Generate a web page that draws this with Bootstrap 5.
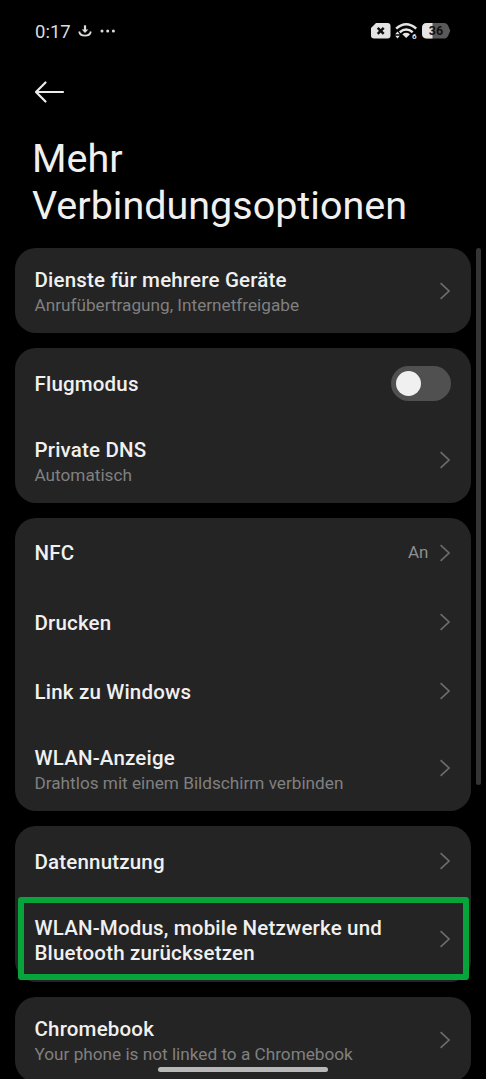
<!DOCTYPE html>
<html lang="de" data-bs-theme="dark">
<head>
<meta charset="utf-8">
<meta name="viewport" content="width=device-width, initial-scale=1">
<title>Mehr Verbindungsoptionen</title>
<link href="https://cdn.jsdelivr.net/npm/bootstrap@5.3.0/dist/css/bootstrap.min.css" rel="stylesheet">
<style>
  body { background: #fff; font-family: Roboto, "Liberation Sans", sans-serif; color: #f0f0f0; }
  .phone { width: 486px; height: 1079px; background: #000; }
  .statusbar { height: 62px; padding: 0 35px 0 35px; color: #dcdcdc; }
  .clock { font-size: 18.5px; line-height: 22px; padding-top: 1px; }
  .tray { margin-left: 7px; gap: 8px; }
  .backbar { height: 60px; padding: 0 0 1px 34px; }
  .page-title { font-size: 39.5px; line-height: 47px; font-weight: 400; padding: 13px 0 0 32px; height: 126px; color: #f0f0f0; }
  .groups { padding: 0 15px; gap: 15.4px; }
  .group-card { background: #242424; border: 0; border-radius: 21px; }
  .entry { height: 69.3px; padding: 0 20px 0 19.5px; background: transparent; border: 0; color: inherit; text-align: left; }
  .entry > .entry-name { padding-top: 2px; }
  .entry-tall { height: 85px; }
  .entry-tall > span:first-child { padding-top: 5px; }
  .entry-reset { height: 86px; }
  .entry-name { font-size: 20.5px; line-height: 25px; font-weight: 500; letter-spacing: .18px; }
  .entry-reset > .entry-name:first-child { padding-top: 4px; }
  .entry-note { font-size: 17.2px; line-height: 25px; color: #808080; }
  .entry-value { font-size: 17px; color: #8e8e8e; padding: 1px 10.500px 0 0; }
  .chev { stroke: #6c6c6c; }
  .toggle { width: 60px; height: 35px; background: #505050; padding-left: 5px; }
  .knob { width: 25px; height: 25px; background: #f0f0f0; }
  .highlight { inset: 1px 2.5px 1.5px 2.5px; border: 6px solid #07a33b; border-radius: 3px; }
  .scrollthumb { left: 476px; top: 248px; width: 5px; height: 537px; background: #343434; }
  .homebar { left: 158px; top: 1067px; width: 170px; height: 5px; background: #b8b8b8; }
</style>
</head>
<body class="overflow-hidden">
<svg class="d-none">
  <symbol id="chevron" viewBox="0 0 12 20"><path d="M1.6 2.2 L10 10 L1.6 17.8" fill="none" stroke-width="1.7"/></symbol>
</svg>
<div class="phone position-relative overflow-hidden">
  <header class="statusbar d-flex align-items-center justify-content-between">
    <div class="d-flex align-items-center">
      <span class="clock">0:17</span>
      <span class="tray d-flex align-items-center">
        <svg width="14" height="14" viewBox="0 0 14 14" fill="none" stroke="#dcdcdc"><path d="M7 1.300v6" stroke-width="2.200"/><path d="M3.700 5.4h6.600L7 9z" fill="#dcdcdc" stroke="none"/><path d="M1.200 7.5C2 13 12 13 12.800 7.5" stroke-width="1.800"/></svg>
        <svg width="17" height="6" viewBox="0 0 17 6" fill="#dcdcdc"><circle cx="2" cy="3" r="1.500"/><circle cx="7.700" cy="3" r="1.500"/><circle cx="13.400" cy="3" r="1.500"/></svg>
      </span>
    </div>
    <svg width="81" height="18" viewBox="0 0 81 18">
      <path d="M6 1h11.500q3 0 3 3v9.500q0 3-3 3H4q-3 0-3-3V6z" fill="#e4e4e4"/>
      <path d="M7.700 5.800l6 6M13.700 5.800l-6 6" stroke="#111" stroke-width="2.500"/>
      <g fill="none" stroke="#e4e4e4" stroke-width="2.500"><path d="M26.200 6.600Q36.200 -2 46.200 6.600"/><path d="M29.700 10.300Q36.200 4.700 42.700 10.300"/></g>
      <path d="M32.300 12.300Q36.200 9.400 40 12.300L36.200 16z" fill="#e4e4e4"/>
      <path d="M25.200 12.200l2.300-2.700 2.300 2.700zM25.200 13.700l2.300 2.700 2.300-2.700z" fill="#e4e4e4"/>
      <text x="42" y="17.200" font-size="8" font-weight="700" fill="#e4e4e4">6</text>
      <path d="M57 1h17q3 0 4.300 3l2 4.700-2 4.700q-1.300 3.100-4.300 3.100H57q-5 0-5-5V6q0-5 5-5z" fill="#595959"/>
      <path d="M57 1h5.500v15.500H57q-5 0-5-5V6q0-5 5-5z" fill="#e4e4e4"/>
      <text x="58.800" y="13" font-size="12.500" font-weight="700" fill="#111">36</text>
    </svg>
  </header>
  <div class="backbar d-flex align-items-center">
    <svg width="32" height="24" viewBox="0 0 32 24" fill="none" stroke="#ececec" stroke-width="2.200" stroke-linecap="round" stroke-linejoin="round"><path d="M29 12H2M11.500 2.500L2 12l9.500 9.500"/></svg>
  </div>
  <h1 class="page-title m-0">Mehr<br>Verbindungsoptionen</h1>

  <main class="groups d-flex flex-column">
    <section class="card group-card">
      <button class="entry entry-tall d-flex align-items-center justify-content-between">
        <span><span class="entry-name d-block">Dienste für mehrere Geräte</span><span class="entry-note d-block">Anrufübertragung, Internetfreigabe</span></span>
        <svg class="chev" width="12" height="20"><use href="#chevron"/></svg>
      </button>
    </section>
    <section class="card group-card">
      <div class="entry d-flex align-items-center justify-content-between">
        <span class="entry-name">Flugmodus</span>
        <span class="toggle rounded-pill d-flex align-items-center"><span class="knob rounded-circle"></span></span>
      </div>
      <button class="entry entry-tall d-flex align-items-center justify-content-between">
        <span><span class="entry-name d-block">Private DNS</span><span class="entry-note d-block">Automatisch</span></span>
        <svg class="chev" width="12" height="20"><use href="#chevron"/></svg>
      </button>
    </section>
    <section class="card group-card">
      <button class="entry d-flex align-items-center">
        <span class="entry-name me-auto">NFC</span><span class="entry-value">An</span>
        <svg class="chev" width="12" height="20"><use href="#chevron"/></svg>
      </button>
      <button class="entry d-flex align-items-center justify-content-between">
        <span class="entry-name">Drucken</span>
        <svg class="chev" width="12" height="20"><use href="#chevron"/></svg>
      </button>
      <button class="entry d-flex align-items-center justify-content-between">
        <span class="entry-name">Link zu Windows</span>
        <svg class="chev" width="12" height="20"><use href="#chevron"/></svg>
      </button>
      <button class="entry entry-tall d-flex align-items-center justify-content-between">
        <span><span class="entry-name d-block">WLAN-Anzeige</span><span class="entry-note d-block">Drahtlos mit einem Bildschirm verbinden</span></span>
        <svg class="chev" width="12" height="20"><use href="#chevron"/></svg>
      </button>
    </section>
    <section class="card group-card">
      <button class="entry d-flex align-items-center justify-content-between">
        <span class="entry-name">Datennutzung</span>
        <svg class="chev" width="12" height="20"><use href="#chevron"/></svg>
      </button>
      <button class="entry entry-reset position-relative d-flex align-items-center justify-content-between">
        <span class="entry-name">WLAN-Modus, mobile Netzwerke und<br>Bluetooth zurücksetzen</span>
        <svg class="chev" width="12" height="20"><use href="#chevron"/></svg>
        <span class="highlight position-absolute"></span>
      </button>
    </section>
    <section class="card group-card">
      <button class="entry entry-tall d-flex align-items-center justify-content-between">
        <span><span class="entry-name d-block">Chromebook</span><span class="entry-note d-block">Your phone is not linked to a Chromebook</span></span>
        <svg class="chev" width="12" height="20"><use href="#chevron"/></svg>
      </button>
    </section>
  </main>
  <div class="scrollthumb position-absolute rounded-pill"></div>
  <div class="homebar position-absolute rounded-pill"></div>
</div>
<script src="https://cdn.jsdelivr.net/npm/bootstrap@5.3.0/dist/js/bootstrap.bundle.min.js"></script>
</body>
</html>
